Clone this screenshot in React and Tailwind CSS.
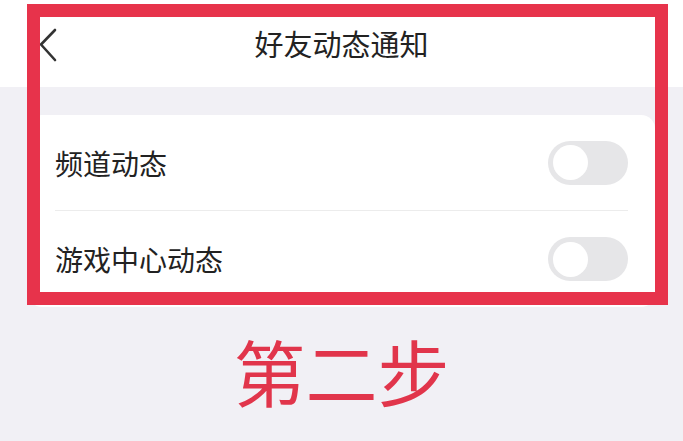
const rows = ['频道动态', '游戏中心动态'];

function Toggle() {
  return (
    <div className="w-[80px] h-[44px] rounded-full bg-[#e6e6e8] flex items-center px-[5px]">
      <div className="w-[35px] h-[35px] rounded-full bg-white" />
    </div>
  );
}

export default function App() {
  return (
    <div
      className="relative w-[683px] h-[441px] overflow-hidden bg-[#f1f0f5] text-[#222]"
      style={{ fontFamily: '"Noto Sans CJK SC", "Noto Sans", sans-serif' }}
    >
      {/* nav bar */}
      <div className="relative h-[87px] bg-white flex items-center justify-center">
        <svg
          className="absolute left-[36px] top-[27px]"
          width="22"
          height="36"
          viewBox="0 0 22 36"
          fill="none"
          stroke="#333"
          strokeWidth="2.6"
          strokeLinecap="round"
          strokeLinejoin="round"
        >
          <polyline points="19,3 5,17.5 19,33" />
        </svg>
        <span className="text-[29px] leading-none">好友动态通知</span>
      </div>

      {/* settings card */}
      <div className="mt-[28px] mx-[28px] rounded-[14px] bg-white px-[27px]">
        {rows.map((label, i) => (
          <div
            key={label}
            className={`h-[96px] flex items-center justify-between ${i === 0 ? 'border-b border-[#ececec]' : ''}`}
          >
            <span className="text-[28px] leading-none">{label}</span>
            <Toggle />
          </div>
        ))}
      </div>

      <div className="mt-[27px] text-center text-[72px] leading-none font-normal text-[#e1354b]">
        第二步
      </div>

      {/* highlight frame */}
      <div className="absolute left-[27px] top-[4px] w-[641px] h-[301px] border-[13px] border-[#e7334b]" />
    </div>
  );
}
